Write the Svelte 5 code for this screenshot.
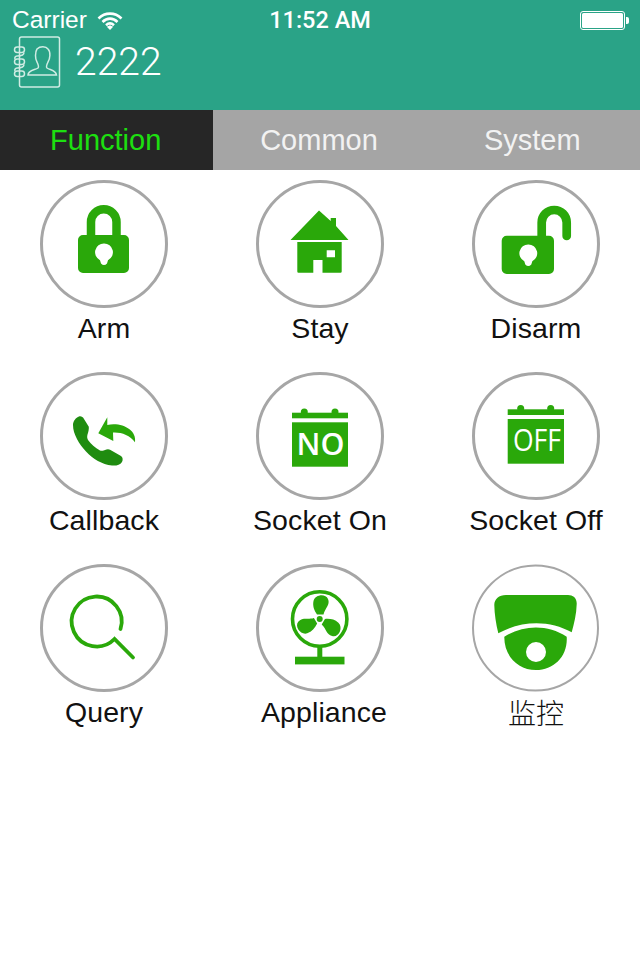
<script>
	const items = [
		{ id: 'arm', label: 'Arm' },
		{ id: 'stay', label: 'Stay' },
		{ id: 'disarm', label: 'Disarm' },
		{ id: 'callback', label: 'Callback' },
		{ id: 'on', label: 'Socket On' },
		{ id: 'off', label: 'Socket Off' },
		{ id: 'query', label: 'Query' },
		{ id: 'appliance', label: 'Appliance' },
		{ id: 'camera', label: '监控' }
	];
	const tabs = ['Function', 'Common', 'System'];
	const bladePath = 'M61 50.5C58 46 56.500 42 57.500 37C59 30.500 69.500 29 72 35C74.500 41 69 44 67.500 50.500Z';
</script>

<main>
	<header>
		<div class="status">
			<div class="carrier">
				<span>Carrier</span>
				<svg class="wifi" width="26" height="19" viewBox="0 0 26 19">
					<path d="M1.500 7.500C8 1 18 1 24.500 7.500" />
					<path d="M5.500 11C10 6.500 16 6.500 20.500 11" />
					<path d="M9 14.200C11.500 12 14.500 12 17 14.200" />
					<polygon class="fill" points="13,19 9.800,15.800 13,14.200 16.200,15.800" />
				</svg>
			</div>
			<div class="time">11:52 AM</div>
			<div class="battery">
				<span class="cell"><span class="charge"></span></span>
				<span class="tip"></span>
			</div>
		</div>
		<div class="title">
			<svg class="contact" width="48" height="52" viewBox="0 0 48 52">
				<rect x="6.500" y="1" width="40" height="50" rx="2" />
				<rect x="1.500" y="11" width="10" height="5.500" rx="2.700" />
				<rect x="1.500" y="23" width="10" height="5.500" rx="2.700" />
				<rect x="1.500" y="35" width="10" height="5.500" rx="2.700" />
				<path d="M11 16.500C11 19 8 20 4 20C2 20 1.500 22 2 23M11 28.500C11 31 8 32 4 32C2 32 1.500 34 2 35" />
				<path d="M15 39C15 34 22 34 25 32C26 31 25 28 24 26C22 23 22 16 24 13C27 10 33 10 35 13C38 16 37 23 35 26C34 28 33 31 34 32C37 34 43 34 43.500 39Z" />
			</svg>
			<span>2222</span>
		</div>
	</header>

	<nav>
		{#each tabs as tab, i}
			<div class="tab" class:active={i === 0}>{tab}</div>
		{/each}
	</nav>

	<section class="grid">
		{#each items as item}
			<div class="item">
				<svg class="icon" width="128" height="128" viewBox="0 0 128 128">
					{#if item.id === 'camera'}
						<circle class="ring thin" cx="63.500" cy="64" r="62.500" />
					{:else}
						<circle class="ring" cx="64" cy="64" r="62.500" />
					{/if}

					{#if item.id === 'arm'}
						<path class="line" d="M51 58V42A12.700 12.700 0 0 1 76.500 42V58" stroke-width="8.500" />
						<path fill-rule="evenodd" d="M43 55H84A5 5 0 0 1 89 60V88A5 5 0 0 1 84 93H43A5 5 0 0 1 38 88V60A5 5 0 0 1 43 55ZM64 63.500A8.800 8.800 0 0 0 60 80.200L61 83.500Q64 86.500 67 83.500L68 80.200A8.800 8.800 0 0 0 64 63.500Z" />
					{:else if item.id === 'stay'}
						<path d="M63 30.500L74.700 41V38H80V46L92.500 60H34.500Z" />
						<path fill-rule="evenodd" d="M41.300 62H85.700V91.500A1.200 1.200 0 0 1 84.500 92.700H66.500V80H57.300V92.700H42.500A1.200 1.200 0 0 1 41.300 91.500ZM70.700 70.300V77.300H79V70.300Z" />
					{:else if item.id === 'disarm'}
						<path class="line" d="M69.700 58V42.500A12.500 12.500 0 0 1 94.700 42.500V56" stroke-width="8.700" />
						<path fill-rule="evenodd" d="M34.700 55.700H77A5 5 0 0 1 82 60.700V89A5 5 0 0 1 77 94H34.700A5 5 0 0 1 29.700 89V60.700A5 5 0 0 1 34.700 55.700ZM56.300 64.500A8.800 8.800 0 0 0 52.300 81.200L53.300 84.500Q56.300 87.500 59.300 84.500L60.300 81.200A8.800 8.800 0 0 0 56.300 64.500Z" />
					{:else if item.id === 'callback'}
						<path class="dark" d="M39 44.500C41 44 43 45 44 47L48.800 54.700C49 57 48.500 60 47.500 62.500C47 64.500 47 66 48 68C51 72 55 76 60 78.500C62 79 64 78.500 65 78C67 77 69 77 70.500 78L81 84C83 85.500 83 88 82 90C80 93 76 94 72 93.500C62 92.500 53 87 46 79.500C39 72 33 62 33 53C33 49 36 45.500 39 44.500Z" />
						<path d="M58.300 61.300L67.300 45.300V53C82 50 97 58 95 70.300C90 63 81 60 73 60.500L73.300 69Z" />
					{:else if item.id === 'on'}
						<circle cx="48.300" cy="40" r="3.500" />
						<circle cx="79" cy="40" r="3.500" />
						<rect x="36" y="40.700" width="56" height="5.600" />
						<rect x="36" y="50.300" width="56" height="44.400" />
						<text class="badge" x="64.500" y="83" font-size="30.500" text-anchor="middle">NO</text>
					{:else if item.id === 'off'}
						<circle cx="48.700" cy="36.500" r="3.500" />
						<circle cx="78.700" cy="36.500" r="3.500" />
						<rect x="35.700" y="37.300" width="56.300" height="5.700" />
						<rect x="35.700" y="47" width="56.300" height="44.700" />
						<text class="badge off" x="41" y="79" font-size="31" textLength="48" lengthAdjust="spacingAndGlyphs">OFF</text>
					{:else if item.id === 'query'}
						<path class="line" d="M80.500 65A25 25 0 1 0 74.500 75L93 93.500" stroke-width="3.800" />
					{:else if item.id === 'appliance'}
						<circle class="line" cx="63.700" cy="55" r="27.200" stroke-width="3.600" />
						<circle cx="63.700" cy="55" r="3" />
						<path d={bladePath} />
						<path d={bladePath} transform="rotate(120 63.700 55)" />
						<path d={bladePath} transform="rotate(240 63.700 55)" />
						<rect x="61.300" y="83" width="5" height="10" />
						<rect x="39" y="92.700" width="49.500" height="7.700" />
					{:else}
						<path d="M34 31H96C101 31 105 34 104.700 40C104.500 50 102 60 99.700 68.300C78 56 50 56 26.300 69.300C24 60 22.500 50 22.300 41C22.300 35 27 31 34 31Z" />
						<path fill-rule="evenodd" d="M32.300 72.700C52 60.500 76 60.500 94.700 72.700C96 92 82 106 64 106C46 106 32 92 32.300 72.700ZM64 78A10 10 0 1 0 64 98A10 10 0 1 0 64 78Z" />
					{/if}
				</svg>
				<div class="label" class:cjk={item.id === 'camera'} class:shift={item.id === 'appliance'}>{item.label}</div>
			</div>
		{/each}
	</section>
</main>

<style>
	:global(body) {
		background: #fff;
	}

	main {
		width: 640px;
		height: 960px;
		overflow: hidden;
		font-family: 'Liberation Sans', Arial, sans-serif;
		color: #000;
	}

	header {
		height: 110px;
		box-sizing: border-box;
		background: #2aa387;
		color: #fff;
	}

	.status {
		display: grid;
		grid-template-columns: 1fr auto 1fr;
		align-items: center;
		height: 40px;
		padding: 0 11px 0 12px;
	}

	.carrier {
		display: flex;
		align-items: center;
		gap: 10px;
		font-size: 24.500px;
	}

	.wifi {
		fill: none;
		stroke: #fff;
		stroke-width: 2.600;
	}

	.wifi .fill {
		fill: #fff;
		stroke: none;
	}

	.time {
		font-family: Roboto, sans-serif;
		font-weight: 500;
		font-size: 23.500px;
		margin-left: -1px;
	}

	.battery {
		display: flex;
		align-items: center;
		justify-content: flex-end;
	}

	.cell {
		display: block;
		width: 45px;
		height: 19px;
		box-sizing: border-box;
		border: 1px solid #fff;
		border-radius: 3px;
		padding: 1px;
	}

	.charge {
		display: block;
		height: 100%;
		background: #fff;
		border-radius: 1.500px;
	}

	.tip {
		width: 3px;
		height: 7px;
		background: #fff;
		border-radius: 0 2px 2px 0;
		margin-left: 1px;
	}

	.title {
		display: flex;
		align-items: center;
		gap: 14px;
		padding-left: 13px;
		margin-top: -4px;
		font-family: Roboto, sans-serif;
		font-weight: 300;
		font-size: 39px;
	}

	.contact {
		fill: none;
		stroke: #d0ece4;
		stroke-width: 1.500;
	}

	nav {
		display: grid;
		grid-template-columns: repeat(3, 1fr);
		height: 60px;
		background: #a5a5a5;
	}

	.tab {
		display: flex;
		align-items: center;
		justify-content: center;
		padding-right: 2px;
		font-size: 29px;
		color: #f2f2f2;
	}

	.tab.active {
		background: #262626;
		color: #1de010;
	}

	.grid {
		display: grid;
		grid-template-columns: repeat(3, 128px);
		column-gap: 88px;
		row-gap: 22px;
		justify-content: center;
		padding-top: 10px;
	}

	.item {
		display: flex;
		flex-direction: column;
		align-items: center;
		height: 170px;
	}

	.icon {
		display: block;
		flex: none;
		fill: #2aa80a;
	}

	.ring {
		fill: #fff;
		stroke: #a6a6a6;
		stroke-width: 3;
	}

	.ring.thin {
		stroke-width: 2;
	}

	.line {
		fill: none;
		stroke: #2aa80a;
		stroke-linecap: round;
	}

	.dark {
		fill: #1f8c10;
	}

	.badge {
		fill: #fff;
		font-family: 'Open Sans', sans-serif;
		font-weight: 600;
	}

	.badge.off {
		font-weight: 500;
	}

	.label {
		margin-top: 3px;
		font-size: 28.500px;
		line-height: 34px;
		letter-spacing: 0.100px;
		white-space: nowrap;
		color: #111;
	}

	.label.shift {
		margin-left: 8px;
	}

	.label.cjk {
		font-family: 'Noto Sans CJK SC', sans-serif;
		font-size: 28px;
		font-weight: 300;
	}
</style>
